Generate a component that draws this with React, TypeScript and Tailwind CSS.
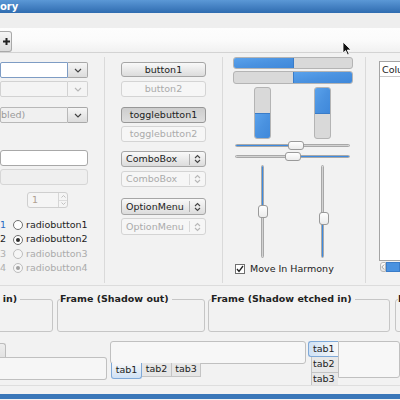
import React from 'react';

const FONT = { fontFamily: '"DejaVu Sans", Verdana, sans-serif' };

function ChevronDown({ dim = false }: { dim?: boolean }) {
  return (
    <svg width="8" height="5" viewBox="0 0 8 5">
      <path d="M1 1 L4 4 L7 1" fill="none" stroke={dim ? '#b8b8b8' : '#444'} strokeWidth="1.2" />
    </svg>
  );
}

function UpDown({ dim = false }: { dim?: boolean }) {
  const c = dim ? '#b8b8b8' : '#444';
  return (
    <svg width="7" height="10" viewBox="0 0 7 10">
      <path d="M1 4 L3.5 1.5 L6 4" fill="none" stroke={c} strokeWidth="1.1" />
      <path d="M1 6 L3.5 8.5 L6 6" fill="none" stroke={c} strokeWidth="1.1" />
    </svg>
  );
}

function Combo({ text, dim, focus, h = 16 }: { text?: string; dim?: boolean; focus?: boolean; h?: number }) {
  return (
    <div className="flex w-[88px]" style={{ height: h }}>
      <div
        className={
          'flex-1 flex items-center text-[9.5px] border rounded-l-[2px] overflow-hidden whitespace-nowrap ' +
          (dim
            ? 'bg-[#f4f4f4] border-[#d2d2d2] text-[#a8a8a8]'
            : focus
            ? 'bg-white border-[#7e9cc4]'
            : 'bg-[#f0f0f0] border-[#b8b8b8] text-[#9a9a9a]')
        }
      >
        {text}
      </div>
      <div
        className={
          'w-[20px] flex items-center justify-center border border-l-0 rounded-r-[2px] ' +
          (dim ? 'bg-[#f4f4f4] border-[#d2d2d2]' : 'bg-gradient-to-b from-[#f6f6f6] to-[#dcdcdc] border-[#a8a8a8]')
        }
      >
        <ChevronDown dim={dim} />
      </div>
    </div>
  );
}

function Button({
  label,
  dim,
  pressed,
  h,
  mt,
  arrows,
}: {
  label: string;
  dim?: boolean;
  pressed?: boolean;
  h: number;
  mt: number;
  arrows?: boolean;
}) {
  const cls = dim
    ? 'bg-[#f6f6f6] border-[#d4d4d4] text-[#ababab]'
    : pressed
    ? 'bg-gradient-to-b from-[#cdcdcd] to-[#dedede] border-[#979797] text-[#222]'
    : 'bg-gradient-to-b from-[#f9f9f9] to-[#dcdcdc] border-[#a6a6a6] text-[#222]';
  return (
    <div
      className={'w-[85px] flex items-center border rounded-[3px] text-[9.5px] ' + cls}
      style={{ height: h, marginTop: mt }}
    >
      {arrows ? (
        <>
          <span className="flex-1 pl-[4px] leading-none whitespace-nowrap">{label}</span>
          <div className={'w-px h-[11px] ' + (dim ? 'bg-[#dadada]' : 'bg-[#b0b0b0]')} />
          <div className="w-[15px] flex justify-center">
            <UpDown dim={dim} />
          </div>
        </>
      ) : (
        <span className="flex-1 text-center leading-none whitespace-nowrap">{label}</span>
      )}
    </div>
  );
}

function Radio({ n, checked, dim, numColor }: { n: string; checked?: boolean; dim?: boolean; numColor: string }) {
  return (
    <div className="flex items-center h-[14.4px] text-[9.5px]">
      <span className="w-[13px]" style={{ color: numColor }}>
        {n}
      </span>
      <div
        className={
          'w-[10px] h-[10px] rounded-full border flex items-center justify-center ' +
          (dim ? 'border-[#bdbdbd] bg-[#f6f6f6]' : 'border-[#707070] bg-white')
        }
      >
        {checked && <div className={'w-[4px] h-[4px] rounded-full ' + (dim ? 'bg-[#a0a0a0]' : 'bg-[#2e2e2e]')} />}
      </div>
      <span className={'ml-[3px] whitespace-nowrap ' + (dim ? 'text-[#ababab]' : 'text-[#222]')}>radiobutton{n}</span>
    </div>
  );
}

function VSep() {
  return <div className="w-px self-stretch mt-[4px] mb-[2px] bg-[#dadada]" />;
}

function Frame({ label, w, right }: { label: string; w: number; right?: boolean }) {
  return (
    <div className="relative h-[33px] border border-[#c6c6c6] rounded-[3px]" style={{ width: w }}>
      <div
        className={
          'absolute -top-[7px] flex whitespace-nowrap ' + (right ? 'right-[32px] w-0 justify-end' : 'left-[2px]')
        }
      >
        <span className="bg-[#f2f2f2] pr-[3px] text-[9.5px] font-bold leading-[12px] text-[#222]">{label}</span>
      </div>
    </div>
  );
}

export default function App() {
  return (
    <div className="relative w-[400px] h-[400px] overflow-hidden bg-[#f2f2f2] text-[#222]" style={FONT}>
      {/* title bar */}
      <div className="h-[13px] bg-gradient-to-b from-[#5b98d6] to-[#2f6cb0] flex items-center">
        <span className="text-white text-[10px] font-bold leading-none">ory</span>
      </div>
      {/* menu bar */}
      <div className="h-[15px] bg-[#eeeeee]" />
      {/* toolbar */}
      <div className="h-[25px] bg-gradient-to-b from-[#fdfdfd] via-[#fbfbfb] to-[#f1f1f1] border-b border-[#d3d3d3] flex items-end">
        <div className="w-[12px] h-[21px] bg-gradient-to-b from-[#f6f6f6] to-[#dcdcdc] border border-l-0 border-[#a9a9a9] rounded-r-[3px] flex items-center justify-end pr-[1px]">
          <svg width="7" height="7" viewBox="0 0 7 7">
            <path d="M0 3.5 H7 M3.5 0 V7" stroke="#222" strokeWidth="2" />
          </svg>
        </div>
      </div>

      {/* main widgets */}
      <div className="flex h-[233px] border-b border-[#dcdcdc]">
        {/* left column */}
        <div className="w-[88px] flex flex-col pt-[9px]">
          <Combo focus />
          <div className="mt-[3px]">
            <Combo dim />
          </div>
          <div className="mt-[10px]">
            <Combo text="bled)" />
          </div>
          <div className="mt-[27px] h-[16px] bg-white border border-[#a8a8a8] rounded-[3px]" />
          <div className="mt-[3px] h-[16px] bg-[#efefef] border border-[#d6d6d6] rounded-[3px]" />
          <div className="mt-[7px] ml-[27px] w-[41px] h-[16px] flex border border-[#cfcfcf] rounded-[3px] bg-[#f5f5f5]">
            <span className="flex-1 pl-[4px] text-[9.5px] leading-[14px] text-[#b0a090]">1</span>
            <div className="w-[9px] flex flex-col border-l border-[#d6d6d6]">
              <div className="flex-1 flex items-center justify-center border-b border-[#dcdcdc]">
                <svg width="5" height="3" viewBox="0 0 5 3">
                  <path d="M0.5 2.5 L2.5 0.5 L4.5 2.5" fill="none" stroke="#bbb" strokeWidth="0.9" />
                </svg>
              </div>
              <div className="flex-1 flex items-center justify-center">
                <svg width="5" height="3" viewBox="0 0 5 3">
                  <path d="M0.5 0.5 L2.5 2.5 L4.5 0.5" fill="none" stroke="#bbb" strokeWidth="0.9" />
                </svg>
              </div>
            </div>
          </div>
          <div className="mt-[10px] flex flex-col">
            <Radio n="1" numColor="#2a6bc2" />
            <Radio n="2" checked numColor="#222" />
            <Radio n="3" dim numColor="#b0b0b0" />
            <Radio n="4" checked dim numColor="#b0b0b0" />
          </div>
        </div>

        <div className="w-[16px]" />
        <VSep />
        <div className="w-[16px]" />

        {/* button column */}
        <div className="w-[85px] flex flex-col pt-[9px]">
          <Button label="button1" h={15} mt={0} />
          <Button label="button2" h={16} mt={4} dim />
          <Button label="togglebutton1" h={16} mt={10} pressed />
          <Button label="togglebutton2" h={16} mt={3} dim />
          <Button label="ComboBox" h={16} mt={9} arrows />
          <Button label="ComboBox" h={16} mt={4} arrows dim />
          <Button label="OptionMenu" h={17} mt={11} arrows />
          <Button label="OptionMenu" h={17} mt={3} arrows dim />
        </div>

        <div className="w-[16px]" />
        <VSep />
        <div className="w-[10px]" />

        {/* progress / scale column */}
        <div className="w-[120px] flex flex-col pt-[4px]">
          <div className="h-[12px] flex border border-[#b4b4b4] rounded-[3px] overflow-hidden bg-[#d9d9d9]">
            <div className="w-[60px] bg-gradient-to-br from-[#5aa2ec] via-[#4a92e0] to-[#3f88da] border-r border-[#3a7cc8]" />
          </div>
          <div className="mt-[2px] h-[13px] flex border border-[#b4b4b4] rounded-[3px] overflow-hidden bg-[#d9d9d9]">
            <div className="w-[59px]" />
            <div className="flex-1 bg-gradient-to-br from-[#5aa2ec] via-[#4a92e0] to-[#3f88da] border-l border-[#3a7cc8]" />
          </div>
          <div className="mt-[3px] h-[52px] flex">
            <div className="ml-[21px] w-[17px] flex flex-col border border-[#b4b4b4] rounded-[3px] overflow-hidden bg-[#d9d9d9]">
              <div className="flex-1" />
              <div className="flex-1 bg-gradient-to-br from-[#5aa2ec] via-[#4a92e0] to-[#3f88da] border-t border-[#3a7cc8]" />
            </div>
            <div className="ml-[43px] w-[17px] flex flex-col border border-[#b4b4b4] rounded-[3px] overflow-hidden bg-[#d9d9d9]">
              <div className="flex-1 bg-gradient-to-br from-[#5aa2ec] via-[#4a92e0] to-[#3f88da] border-b border-[#3a7cc8]" />
              <div className="flex-1" />
            </div>
          </div>
          {/* horizontal scales */}
          <div className="mt-[2px] h-[9px] relative flex items-center">
            <div className="ml-[2px] w-[115px] h-[3px] flex rounded-full overflow-hidden border border-[#a8a8a8]">
              <div className="w-[55px] bg-[#3d8ae0]" />
              <div className="flex-1 bg-[#d2d2d2]" />
            </div>
            <div className="absolute left-[55px] top-0 w-[16px] h-[9px] rounded-[3px] border border-[#9a9a9a] bg-gradient-to-b from-white to-[#ececec]" />
          </div>
          <div className="mt-[2px] h-[9px] relative flex items-center">
            <div className="ml-[2px] w-[115px] h-[3px] flex rounded-full overflow-hidden border border-[#a8a8a8]">
              <div className="w-[62px] bg-[#d2d2d2]" />
              <div className="flex-1 bg-[#3d8ae0]" />
            </div>
            <div className="absolute left-[52px] top-0 w-[16px] h-[9px] rounded-[3px] border border-[#9a9a9a] bg-gradient-to-b from-white to-[#ececec]" />
          </div>
          {/* vertical scales */}
          <div className="mt-[4px] h-[94px] relative flex">
            <div className="ml-[28px] w-[3px] h-[93px] flex flex-col border border-[#a8a8a8] rounded-full overflow-hidden">
              <div className="h-[44px] bg-[#3d8ae0]" />
              <div className="flex-1 bg-[#d2d2d2]" />
            </div>
            <div className="ml-[57px] w-[3px] h-[93px] flex flex-col border border-[#a8a8a8] rounded-full overflow-hidden">
              <div className="h-[50px] bg-[#d2d2d2]" />
              <div className="flex-1 bg-[#3d8ae0]" />
            </div>
            <div className="absolute left-[25px] top-[40px] w-[10px] h-[13px] rounded-[3px] border border-[#9a9a9a] bg-gradient-to-b from-white to-[#ececec]" />
            <div className="absolute left-[86px] top-[47px] w-[10px] h-[13px] rounded-[3px] border border-[#9a9a9a] bg-gradient-to-b from-white to-[#ececec]" />
          </div>
          <div className="mt-[4px] h-[11px] flex items-center ml-[2px]">
            <div className="w-[10px] h-[10px] border border-[#707070] bg-white flex items-center justify-center">
              <svg width="8" height="8" viewBox="0 0 8 8">
                <path d="M1 4 L3 6.5 L7 1" fill="none" stroke="#222" strokeWidth="1.3" />
              </svg>
            </div>
            <span className="ml-[5px] text-[9.5px] leading-none whitespace-nowrap">Move In Harmony</span>
          </div>
        </div>

        <div className="w-[12px]" />
        <VSep />
        <div className="w-[13px]" />

        {/* tree view */}
        <div className="flex-1 flex flex-col pt-[8px] min-w-0">
          <div className="h-[200px] w-[40px] bg-white border border-[#a4a4a4] flex flex-col">
            <div className="h-[15px] border-b border-[#c8c8c8] text-[9.5px] leading-[15px] pl-[2px] whitespace-nowrap">
              Column
            </div>
          </div>
          <div className="mt-[1px] h-[10px] flex">
            <div className="ml-[1px] w-[10px] h-[10px] border border-[#b8b8b8] rounded-l-[3px] bg-gradient-to-b from-white to-[#e6e6e6] flex items-center justify-center">
              <svg width="4" height="6" viewBox="0 0 4 6">
                <path d="M3.2 0.5 L0.8 3 L3.2 5.5" fill="none" stroke="#999" strokeWidth="0.9" />
              </svg>
            </div>
            <div className="w-[30px] h-[10px] bg-[#4a92e0] border border-[#3a7cc8]" />
          </div>
        </div>
      </div>

      {/* frames */}
      <div className="flex mt-[13px] h-[34px]">
        <div className="-ml-[50px]">
          <Frame label="Frame (Shadow in)" w={103} right />
        </div>
        <div className="ml-[4px]">
          <Frame label="Frame (Shadow out)" w={148} />
        </div>
        <div className="ml-[3px]">
          <Frame label="Frame (Shadow etched in)" w={182} />
        </div>
        <div className="ml-[5px]">
          <Frame label="Frame" w={60} />
        </div>
      </div>

      {/* notebooks */}
      <div className="flex mt-[8px] h-[39px]">
        <div className="w-[107px] flex flex-col pt-[2px]">
          <div className="w-[6px] h-[14px] border border-l-0 border-b-0 border-[#bcbcbc] rounded-tr-[3px] bg-gradient-to-b from-[#ededed] to-[#e2e2e2]" />
          <div className="h-[23px] border border-l-0 border-[#c0c0c0] rounded-r-[3px] bg-[#f6f6f6]" />
        </div>
        <div className="ml-[3px] w-[196px] flex flex-col">
          <div className="h-[23px] border border-[#c0c0c0] rounded-[3px] bg-[#f7f7f7]" />
          <div className="flex -mt-[1px] ml-[1px] text-[9.5px]">
            <div className="w-[31px] h-[16px] border border-t-0 border-[#7fa9d8] rounded-b-[3px] bg-gradient-to-b from-[#f8f8f8] to-[#cfe1f5] flex items-center justify-center">
              tab1
            </div>
            <div className="w-[30px] h-[14px] border border-t-0 border-l-0 border-[#c4c4c4] bg-[#e6e6e6] flex items-center justify-center">
              tab2
            </div>
            <div className="w-[29px] h-[14px] border border-t-0 border-l-0 border-[#c4c4c4] bg-[#e6e6e6] flex items-center justify-center">
              tab3
            </div>
          </div>
        </div>
        <div className="ml-[2px] flex-1 flex">
          <div className="w-[30px] flex flex-col text-[9.5px]">
            <div className="h-[18px] border border-r-0 border-[#7fa9d8] rounded-l-[3px] bg-gradient-to-r from-[#cfe1f5] to-[#f8f8f8] flex items-center pl-[4px]">
              tab1
            </div>
            <div className="ml-[3px] h-[16px] border border-r-0 border-t-0 border-[#c4c4c4] bg-[#e8e8e8] flex items-center pl-[1px]">
              tab2
            </div>
            <div className="ml-[3px] h-[13px] border-l border-[#c4c4c4] bg-[#e8e8e8] flex items-start pl-[1px] leading-[12px]">
              tab3
            </div>
          </div>
          <div className="flex-1 h-[37px] border border-[#c0c0c0] rounded-r-[3px] bg-[#f7f7f7]" />
        </div>
      </div>

      <div className="mt-[5px] h-px bg-[#dedede]" />
      <div className="h-[8px]" />
      <div className="h-[5px] bg-[#3a77b9]" />

      {/* mouse pointer */}
      <svg className="absolute left-[342px] top-[41px]" width="10" height="15" viewBox="0 0 10 15">
        <path d="M1 1 L1 12 L3.6 9.6 L5.6 14 L7.2 13.2 L5.3 9 L9 9 Z" fill="#111" stroke="#fff" strokeWidth="0.8" />
      </svg>
    </div>
  );
}
